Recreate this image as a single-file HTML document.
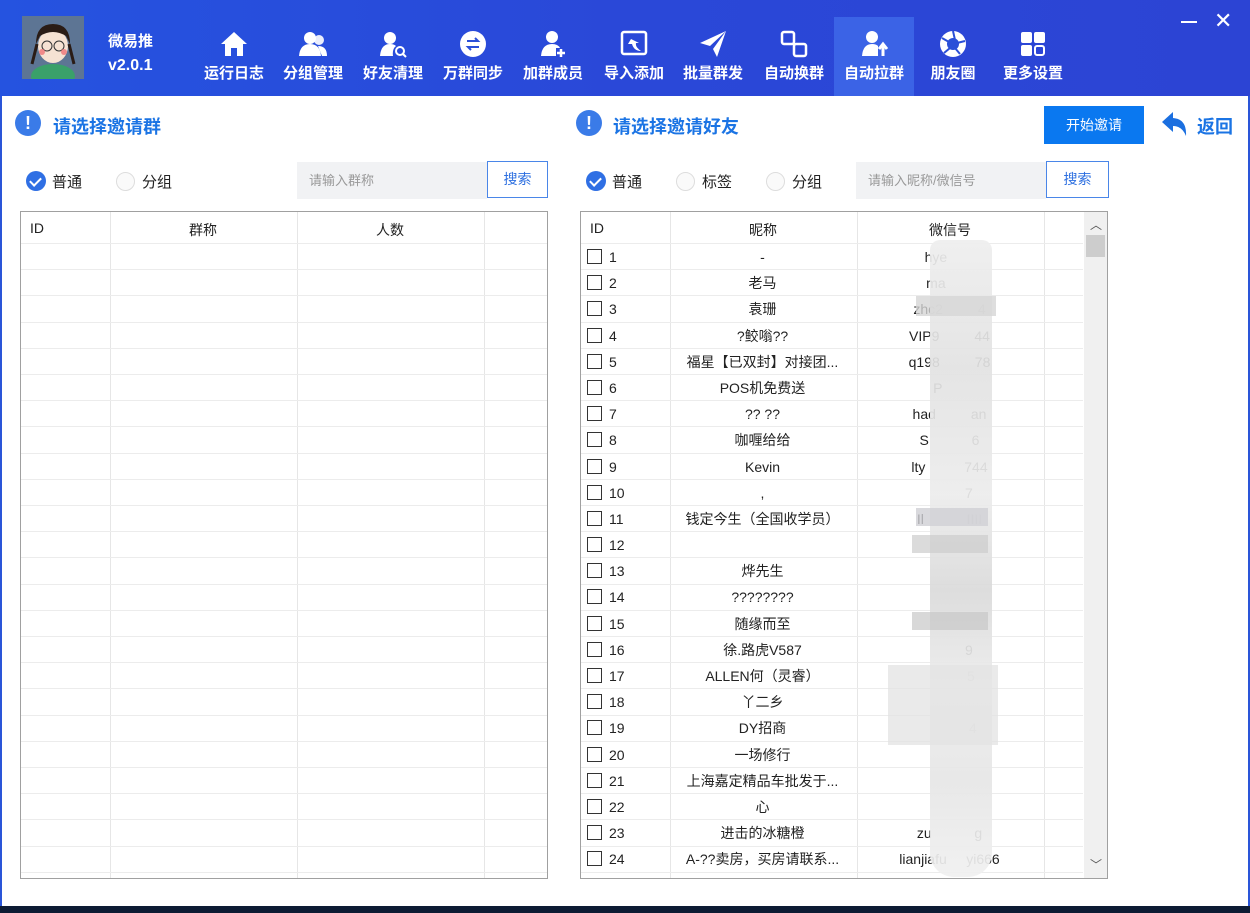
<!DOCTYPE html>
<html><head><meta charset="utf-8"><style>
*{margin:0;padding:0;box-sizing:border-box}
body{width:1250px;height:913px;overflow:hidden;background:#fff;font-family:"Liberation Sans","Noto Sans CJK SC",sans-serif;position:relative;color:#222}
.hdr{position:absolute;left:0;top:0;width:1250px;height:96px;background:linear-gradient(90deg,#2553e0 0%,#2a48d8 50%,#2c44d4 100%)}
.ab{position:absolute}
.nav{position:absolute;top:17px;width:80px;height:79px;text-align:center;color:#fff;font-weight:bold;font-size:15px;line-height:20px}
.nav svg{display:block;margin:12px auto 5px;width:30px;height:30px}
.nav.act{background:#3b63e6}
.t{font-size:14px;position:absolute;white-space:nowrap}
.tbl{position:absolute;border:1px solid #a0a0a0;background:#fff}
.hl{position:absolute;left:0;right:0;height:1px;background:#ececec}
.vl{position:absolute;top:0;bottom:0;width:1px;background:#e6e6e6}
.cb{position:absolute;width:15px;height:15px;border:1.5px solid #333}
.radio{position:absolute;width:19px;height:19px;border-radius:50%;border:1px solid #ddd;background:#fafafa}
.chk{position:absolute;width:20px;height:20px;border-radius:50%;background:#2f6fe4}
.chk:after{content:"";position:absolute;left:6px;top:4px;width:5px;height:9px;border:solid #fff;border-width:0 2.5px 2.5px 0;transform:rotate(45deg)}
.inp{position:absolute;height:37px;background:#f1f2f4;color:#999;font-size:13px;line-height:37px;padding-left:12px}
.btn{position:absolute;height:37px;border:1.5px solid #4a86e8;color:#2d6fe0;font-size:14px;line-height:34px;text-align:center;background:#fff}
.warn{position:absolute;width:26px;height:26px;border-radius:50%;background:#3a7be8;color:#fff;text-align:center;font-weight:bold;font-size:18px;line-height:26px}
.ttl{position:absolute;color:#1b74e4;font-weight:bold;font-size:18px}
.r{position:relative;height:26.2px;font-size:14px;line-height:26px}
.r .cb{left:7px;top:5px}
.r .i{position:absolute;left:29px;top:0}
.r .n{position:absolute;left:89px;width:187px;text-align:center;top:0;white-space:nowrap}
.r .w{position:absolute;left:276px;width:187px;text-align:center;top:0;white-space:nowrap}
</style></head><body>
<div class="hdr"></div>
<div class="ab" style="left:0;top:96px;width:2px;height:817px;background:#2a55d8"></div>
<div class="ab" style="right:0;top:96px;width:2px;height:817px;background:#2a55d8"></div>
<div class="ab" style="left:0;top:906px;width:1250px;height:7px;background:#0d1b33"></div>
<div class="ab" style="left:22px;top:16px;width:62px;height:63px;background:#5d7594;overflow:hidden">
<svg width="62" height="63" viewBox="0 0 62 63"><ellipse cx="31" cy="60" rx="22" ry="12" fill="#3aa06a"/><ellipse cx="31" cy="30" rx="15" ry="17" fill="#f6e2d3"/><path d="M14 28 Q14 8 31 8 Q48 8 48 28 L44 20 Q31 12 18 20Z" fill="#2a1c16"/><path d="M15 28 L10 48 M47 28 L52 48" stroke="#2a1c16" stroke-width="3"/><circle cx="25" cy="30" r="5" fill="none" stroke="#333"/><circle cx="37" cy="30" r="5" fill="none" stroke="#333"/><circle cx="20" cy="36" r="3" fill="#f08a8a"/><circle cx="42" cy="36" r="3" fill="#f08a8a"/></svg></div>
<div class="t" style="left:108px;top:30px;color:#fff;font-weight:bold;font-size:15px">微易推</div>
<div class="t" style="left:108px;top:57px;color:#fff;font-weight:bold;font-size:16px">v2.0.1</div>
<div class="nav" style="left:194px"><svg viewBox="0 0 30 30"><path d="M15 3 L28 15 H24 V27 H18 V19 H12 V27 H6 V15 H2Z" fill="#fff"/></svg>运行日志</div>
<div class="nav" style="left:273px"><svg viewBox="0 0 30 30"><circle cx="12" cy="9" r="6" fill="#fff"/><path d="M1 27 Q2 15 12 15 Q22 15 23 27Z" fill="#fff"/><circle cx="21" cy="11" r="5" fill="#fff" opacity=".9"/><path d="M20 17 Q29 17 29 27 H24Z" fill="#fff"/></svg>分组管理</div>
<div class="nav" style="left:353px"><svg viewBox="0 0 30 30"><circle cx="12" cy="9" r="6" fill="#fff"/><path d="M2 27 Q3 15 12 15 Q16 15 18 17 Q14 20 15 27Z" fill="#fff"/><circle cx="22" cy="22" r="4" fill="none" stroke="#fff" stroke-width="2"/><path d="M25 25 L28 28" stroke="#fff" stroke-width="2"/></svg>好友清理</div>
<div class="nav" style="left:433px"><svg viewBox="0 0 30 30"><circle cx="15" cy="15" r="13" fill="#fff"/><path d="M9 12 H20 L17 9 M21 18 H10 L13 21" stroke="#2a4fd8" stroke-width="2" fill="none"/></svg>万群同步</div>
<div class="nav" style="left:513px"><svg viewBox="0 0 30 30"><circle cx="14" cy="8" r="6" fill="#fff"/><path d="M3 27 Q4 15 14 15 Q20 15 22 19 H18 V27Z" fill="#fff"/><path d="M23 20 V28 M19 24 H27" stroke="#fff" stroke-width="2.5"/></svg>加群成员</div>
<div class="nav" style="left:594px"><svg viewBox="0 0 30 30"><rect x="3" y="3" width="24" height="22" rx="2" fill="none" stroke="#fff" stroke-width="2.5"/><path d="M12 10 L9 15 L13 15 Q15 22 22 22 Q16 18 17 14 L20 14Z" fill="#fff"/></svg>导入添加</div>
<div class="nav" style="left:673px"><svg viewBox="0 0 30 30"><path d="M28 2 L2 14 L12 17 L28 2 L15 20 L19 28Z" fill="#fff"/></svg>批量群发</div>
<div class="nav" style="left:754px"><svg viewBox="0 0 30 30"><rect x="3" y="3" width="12" height="12" rx="2" fill="none" stroke="#fff" stroke-width="2.5"/><rect x="15" y="15" width="12" height="12" rx="2" fill="none" stroke="#fff" stroke-width="2.5"/></svg>自动换群</div>
<div class="nav act" style="left:834px"><svg viewBox="0 0 30 30"><circle cx="13" cy="8" r="6" fill="#fff"/><path d="M3 27 Q4 15 13 15 Q17 15 19 17 V27Z" fill="#fff"/><path d="M24 27 V16 M20 20 L24 15 L28 20" stroke="#fff" stroke-width="3" fill="none"/></svg>自动拉群</div>
<div class="nav" style="left:913px"><svg viewBox="0 0 30 30"><circle cx="15" cy="15" r="13" fill="#fff"/><circle cx="15" cy="15" r="6" fill="#2a4fd8"/><path d="M15 2 L17 11 M27 12 L19 14 M22 25 L17 19 M6 24 L12 19 M4 9 L11 13" stroke="#2a4fd8" stroke-width="2"/></svg>朋友圈</div>
<div class="nav" style="left:993px"><svg viewBox="0 0 30 30"><rect x="3" y="3" width="11" height="11" rx="2" fill="#fff"/><rect x="16" y="3" width="11" height="11" rx="2" fill="#fff"/><rect x="3" y="16" width="11" height="11" rx="2" fill="#fff"/><rect x="17" y="17" width="9" height="9" rx="2" fill="none" stroke="#fff" stroke-width="2"/></svg>更多设置</div>
<div class="ab" style="left:1181px;top:21px;width:16px;height:2px;background:#fff"></div>
<div class="t" style="left:1214px;top:8px;color:#fff;font-size:22px">✕</div>

<div class="warn" style="left:15px;top:110px">!</div>
<div class="ttl" style="left:53px;top:113px">请选择邀请群</div>
<div class="chk" style="left:26px;top:171px"></div><div class="t" style="left:52px;top:171px;font-size:15px">普通</div>
<div class="radio" style="left:116px;top:172px"></div><div class="t" style="left:142px;top:171px;font-size:15px">分组</div>
<div class="inp" style="left:297px;top:162px;width:190px">请输入群称</div>
<div class="btn" style="left:487px;top:161px;width:61px">搜索</div>

<div class="tbl" style="left:20px;top:211px;width:528px;height:668px;overflow:hidden">
<div class="vl" style="left:89px"></div><div class="vl" style="left:276px"></div><div class="vl" style="left:463px"></div>
<div class="t" style="left:9px;top:8px">ID</div><div class="t" style="left:168px;top:8px">群称</div><div class="t" style="left:355px;top:8px">人数</div>
<div class="hl" style="top:31px"></div><div class="hl" style="top:57px"></div><div class="hl" style="top:83px"></div><div class="hl" style="top:110px"></div><div class="hl" style="top:136px"></div><div class="hl" style="top:162px"></div><div class="hl" style="top:188px"></div><div class="hl" style="top:214px"></div><div class="hl" style="top:241px"></div><div class="hl" style="top:267px"></div><div class="hl" style="top:293px"></div><div class="hl" style="top:319px"></div><div class="hl" style="top:345px"></div><div class="hl" style="top:372px"></div><div class="hl" style="top:398px"></div><div class="hl" style="top:424px"></div><div class="hl" style="top:450px"></div><div class="hl" style="top:476px"></div><div class="hl" style="top:503px"></div><div class="hl" style="top:529px"></div><div class="hl" style="top:555px"></div><div class="hl" style="top:581px"></div><div class="hl" style="top:607px"></div><div class="hl" style="top:634px"></div><div class="hl" style="top:660px"></div>
</div>

<div class="warn" style="left:576px;top:110px">!</div>
<div class="ttl" style="left:613px;top:113px">请选择邀请好友</div>
<div class="ab" style="left:1044px;top:106px;width:100px;height:38px;background:#0a78f0;color:#fff;font-size:14px;line-height:38px;text-align:center">开始邀请</div>
<svg class="ab" style="left:1160px;top:110px" width="30" height="28" viewBox="0 0 30 28"><path d="M2 12 L13 2 V8 Q27 9 26 26 Q22 16 13 16 V22Z" fill="#1b6fe0"/></svg>
<div class="ttl" style="left:1197px;top:113px">返回</div>
<div class="chk" style="left:586px;top:171px"></div><div class="t" style="left:612px;top:171px;font-size:15px">普通</div>
<div class="radio" style="left:676px;top:172px"></div><div class="t" style="left:702px;top:171px;font-size:15px">标签</div>
<div class="radio" style="left:766px;top:172px"></div><div class="t" style="left:792px;top:171px;font-size:15px">分组</div>
<div class="inp" style="left:856px;top:162px;width:190px">请输入昵称/微信号</div>
<div class="btn" style="left:1046px;top:161px;width:63px">搜索</div>

<div class="tbl" style="left:580px;top:211px;width:528px;height:668px;overflow:hidden">
<div class="vl" style="left:89px"></div><div class="vl" style="left:276px"></div><div class="vl" style="left:463px"></div>
<div class="ab" style="left:503px;top:0;width:23px;height:666px;background:#f0f0f0"></div>
<div class="ab" style="left:505px;top:23px;width:19px;height:22px;background:#cdcdcd"></div>
<div class="t" style="left:509px;top:4px;font-size:12px;color:#555">︿</div>
<div class="t" style="left:509px;top:644px;font-size:12px;color:#555">﹀</div>
<div class="t" style="left:9px;top:8px">ID</div><div class="t" style="left:168px;top:8px">昵称</div><div class="t" style="left:348px;top:8px">微信号</div>
<div class="hl" style="top:31px;right:24px"></div><div class="hl" style="top:57px;right:24px"></div><div class="hl" style="top:83px;right:24px"></div><div class="hl" style="top:110px;right:24px"></div><div class="hl" style="top:136px;right:24px"></div><div class="hl" style="top:162px;right:24px"></div><div class="hl" style="top:188px;right:24px"></div><div class="hl" style="top:214px;right:24px"></div><div class="hl" style="top:241px;right:24px"></div><div class="hl" style="top:267px;right:24px"></div><div class="hl" style="top:293px;right:24px"></div><div class="hl" style="top:319px;right:24px"></div><div class="hl" style="top:345px;right:24px"></div><div class="hl" style="top:372px;right:24px"></div><div class="hl" style="top:398px;right:24px"></div><div class="hl" style="top:424px;right:24px"></div><div class="hl" style="top:450px;right:24px"></div><div class="hl" style="top:476px;right:24px"></div><div class="hl" style="top:503px;right:24px"></div><div class="hl" style="top:529px;right:24px"></div><div class="hl" style="top:555px;right:24px"></div><div class="hl" style="top:581px;right:24px"></div><div class="hl" style="top:607px;right:24px"></div><div class="hl" style="top:634px;right:24px"></div><div class="hl" style="top:660px;right:24px"></div>
</div>
<div style="position:absolute;left:580px;top:244px;width:480px">
<div class="r"><div class="cb"></div><span class="i">1</span><span class="n">-</span><span class="w">hye&nbsp;&nbsp;&nbsp;&nbsp;&nbsp;&nbsp;&nbsp;</span></div>
<div class="r"><div class="cb"></div><span class="i">2</span><span class="n">老马</span><span class="w">ma&nbsp;&nbsp;&nbsp;&nbsp;&nbsp;&nbsp;&nbsp;</span></div>
<div class="r"><div class="cb"></div><span class="i">3</span><span class="n">袁珊</span><span class="w">zhc2&nbsp;&nbsp;&nbsp;&nbsp;&nbsp;&nbsp;&nbsp;&nbsp;&nbsp;4</span></div>
<div class="r"><div class="cb"></div><span class="i">4</span><span class="n">?鲛嗡??</span><span class="w">VIP9&nbsp;&nbsp;&nbsp;&nbsp;&nbsp;&nbsp;&nbsp;&nbsp;&nbsp;44</span></div>
<div class="r"><div class="cb"></div><span class="i">5</span><span class="n">福星【已双封】对接团...</span><span class="w">q198&nbsp;&nbsp;&nbsp;&nbsp;&nbsp;&nbsp;&nbsp;&nbsp;&nbsp;78</span></div>
<div class="r"><div class="cb"></div><span class="i">6</span><span class="n">POS机免费送</span><span class="w">P&nbsp;&nbsp;&nbsp;&nbsp;&nbsp;&nbsp;</span></div>
<div class="r"><div class="cb"></div><span class="i">7</span><span class="n">?? ??</span><span class="w">had&nbsp;&nbsp;&nbsp;&nbsp;&nbsp;&nbsp;&nbsp;&nbsp;&nbsp;an</span></div>
<div class="r"><div class="cb"></div><span class="i">8</span><span class="n">咖喱给给</span><span class="w">S&nbsp;&nbsp;&nbsp;&nbsp;&nbsp;&nbsp;&nbsp;&nbsp;&nbsp;&nbsp;&nbsp;6</span></div>
<div class="r"><div class="cb"></div><span class="i">9</span><span class="n">Kevin</span><span class="w">lty&nbsp;&nbsp;&nbsp;&nbsp;&nbsp;&nbsp;&nbsp;&nbsp;&nbsp;&nbsp;744</span></div>
<div class="r"><div class="cb"></div><span class="i">10</span><span class="n">,</span><span class="w">&nbsp;&nbsp;&nbsp;&nbsp;&nbsp;&nbsp;&nbsp;&nbsp;&nbsp;&nbsp;7</span></div>
<div class="r"><div class="cb"></div><span class="i">11</span><span class="n">钱定今生（全国收学员）</span><span class="w">Il&nbsp;&nbsp;&nbsp;&nbsp;&nbsp;&nbsp;&nbsp;&nbsp;&nbsp;&nbsp;&nbsp;IIII</span></div>
<div class="r"><div class="cb"></div><span class="i">12</span></div>
<div class="r"><div class="cb"></div><span class="i">13</span><span class="n">烨先生</span></div>
<div class="r"><div class="cb"></div><span class="i">14</span><span class="n">????????</span></div>
<div class="r"><div class="cb"></div><span class="i">15</span><span class="n">随缘而至</span></div>
<div class="r"><div class="cb"></div><span class="i">16</span><span class="n">徐.路虎V587</span><span class="w">&nbsp;&nbsp;&nbsp;&nbsp;&nbsp;&nbsp;&nbsp;&nbsp;&nbsp;&nbsp;9</span></div>
<div class="r"><div class="cb"></div><span class="i">17</span><span class="n">ALLEN何（灵睿）</span><span class="w">&nbsp;&nbsp;&nbsp;&nbsp;&nbsp;&nbsp;&nbsp;&nbsp;&nbsp;&nbsp;&nbsp;5</span></div>
<div class="r"><div class="cb"></div><span class="i">18</span><span class="n">丫二乡</span></div>
<div class="r"><div class="cb"></div><span class="i">19</span><span class="n">DY招商</span><span class="w">&nbsp;&nbsp;&nbsp;&nbsp;&nbsp;&nbsp;&nbsp;&nbsp;&nbsp;&nbsp;&nbsp;&nbsp;4</span></div>
<div class="r"><div class="cb"></div><span class="i">20</span><span class="n">一场修行</span></div>
<div class="r"><div class="cb"></div><span class="i">21</span><span class="n">上海嘉定精品车批发于...</span></div>
<div class="r"><div class="cb"></div><span class="i">22</span><span class="n">心</span></div>
<div class="r"><div class="cb"></div><span class="i">23</span><span class="n">进击的冰糖橙</span><span class="w">zu&nbsp;&nbsp;&nbsp;&nbsp;&nbsp;&nbsp;&nbsp;&nbsp;&nbsp;&nbsp;&nbsp;g</span></div>
<div class="r"><div class="cb"></div><span class="i">24</span><span class="n">A-??卖房，买房请联系...</span><span class="w">lianjiafu&nbsp;&nbsp;&nbsp;&nbsp;&nbsp;yi666</span></div>
</div>
<div class="ab" style="left:930px;top:240px;width:62px;height:637px;background:linear-gradient(180deg,#eeeeee,#e2e2e2 20%,#ececec 40%,#dadada 55%,#ececec 70%,#e6e6e6 85%,#f0f0f0);border-radius:10px 10px 24px 24px;opacity:.92"></div>
<div class="ab" style="left:916px;top:296px;width:80px;height:20px;background:#d6d6d6;opacity:.8"></div>
<div class="ab" style="left:916px;top:508px;width:72px;height:18px;background:#cfcfd4;opacity:.8"></div>
<div class="ab" style="left:912px;top:535px;width:76px;height:18px;background:#cccccc;opacity:.7"></div>
<div class="ab" style="left:912px;top:612px;width:76px;height:18px;background:#c8c8c8;opacity:.7"></div>
<div class="ab" style="left:888px;top:665px;width:110px;height:80px;background:#e3e3e3;opacity:.75"></div>
</body></html>
